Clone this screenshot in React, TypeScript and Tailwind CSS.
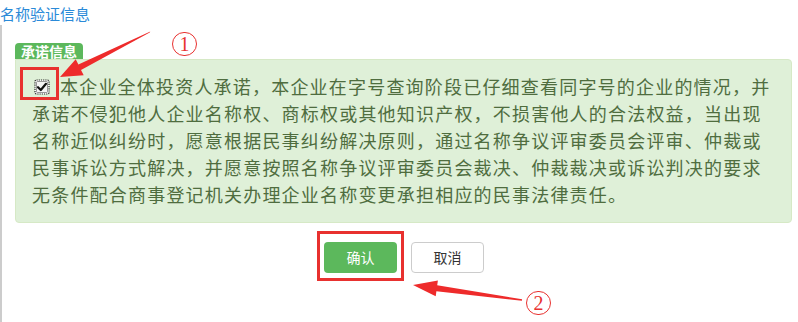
import React from "react";

const lines = [
  "承诺不侵犯他人企业名称权、商标权或其他知识产权，不损害他人的合法权益，当出现",
  "名称近似纠纷时，愿意根据民事纠纷解决原则，通过名称争议评审委员会评审、仲裁或",
  "民事诉讼方式解决，并愿意按照名称争议评审委员会裁决、仲裁裁决或诉讼判决的要求",
  "无条件配合商事登记机关办理企业名称变更承担相应的民事法律责任。",
];

export default function App() {
  return (
    <div
      className="relative w-[798px] h-[322px] overflow-hidden bg-white"
      style={{ fontFamily: '"Noto Sans CJK SC", "Noto Sans", sans-serif' }}
    >
      <div className="h-[25px] pt-[3px] text-[15px] leading-[22px] text-[#2a8ad8] whitespace-nowrap">
        名称验证信息
      </div>
      <div className="h-[297px] border-l-2 border-[#cccccc] pl-[13px] pt-[18px] pr-[6px]">
        <div className="w-[68px] h-[16px] rounded-t-[4px] bg-[#5cb85c] text-center text-[14px] font-bold leading-[16px] text-white">
          承诺信息
        </div>
        <div className="h-[164px] rounded-[4px] rounded-tl-none border border-[#d6e9c6] bg-[#dff0d8] pl-[16px] pt-[13px] text-[18px] leading-[27px] tracking-[1.2px] text-[#4f6d3f]">
          <div className="flex items-center whitespace-nowrap">
            <svg width="16" height="16" viewBox="0 0 16 16" className="ml-[2px] mr-[10px] shrink-0">
              <rect x="1" y="1" width="14" height="14" rx="1.5" fill="#ffffff" stroke="#222" strokeWidth="1.2" strokeDasharray="1.2 1" />
              <rect x="2.5" y="2.5" width="11" height="11" rx="1" fill="#f4f4f4" stroke="#555" strokeWidth="0.6" />
              <path d="M4 8.2 L6.8 11 L12 4.8" fill="none" stroke="#111" strokeWidth="2.2" strokeLinecap="round" strokeLinejoin="round" />
            </svg>
            <span>本企业全体投资人承诺，本企业在字号查询阶段已仔细查看同字号的企业的情况，并</span>
          </div>
          {lines.map((l) => (
            <div key={l} className="whitespace-nowrap">
              {l}
            </div>
          ))}
        </div>
        <div className="mt-[19px] flex justify-center gap-[14px] pl-[1px]">
          <button className="h-[31px] w-[73px] rounded-[4px] bg-[#5cb85c] text-[14px] text-white">
            确认
          </button>
          <button className="h-[31px] w-[73px] rounded-[4px] border border-[#cccccc] bg-white text-[14px] text-[#333333]">
            取消
          </button>
        </div>
      </div>

      {/* annotations */}
      <div className="absolute left-[20px] top-[67px] h-[33px] w-[39px] border-[3px] border-[#e8312f]" />
      <div className="absolute left-[317px] top-[231px] h-[50px] w-[87px] border-[3px] border-[#e8312f]" />
      <svg className="pointer-events-none absolute left-0 top-0" width="798" height="322">
        <polygon
          points="150.3,31.5 78.4,64.5 75.7,59.2 60,77 83.7,75.2 81,69.9 149.7,32.5"
          fill="#ee2b2b"
        />
        <polygon
          points="522.1,299.3 437.2,285.3 437.9,280.4 413,285 435.7,296.2 436.4,291.3 521.9,300.7"
          fill="#ee2b2b"
        />
      </svg>
      <div
        className="absolute left-[172px] top-[32px] flex h-[24px] w-[25px] items-center justify-center rounded-full border border-[#e8312f] text-[20px] leading-none text-[#e8312f]"
        style={{ fontFamily: '"Liberation Serif", serif' }}
      >
        1
      </div>
      <div
        className="absolute left-[526px] top-[291px] flex h-[24px] w-[25px] items-center justify-center rounded-full border border-[#e8312f] text-[20px] leading-none text-[#e8312f]"
        style={{ fontFamily: '"Liberation Serif", serif' }}
      >
        2
      </div>
    </div>
  );
}
